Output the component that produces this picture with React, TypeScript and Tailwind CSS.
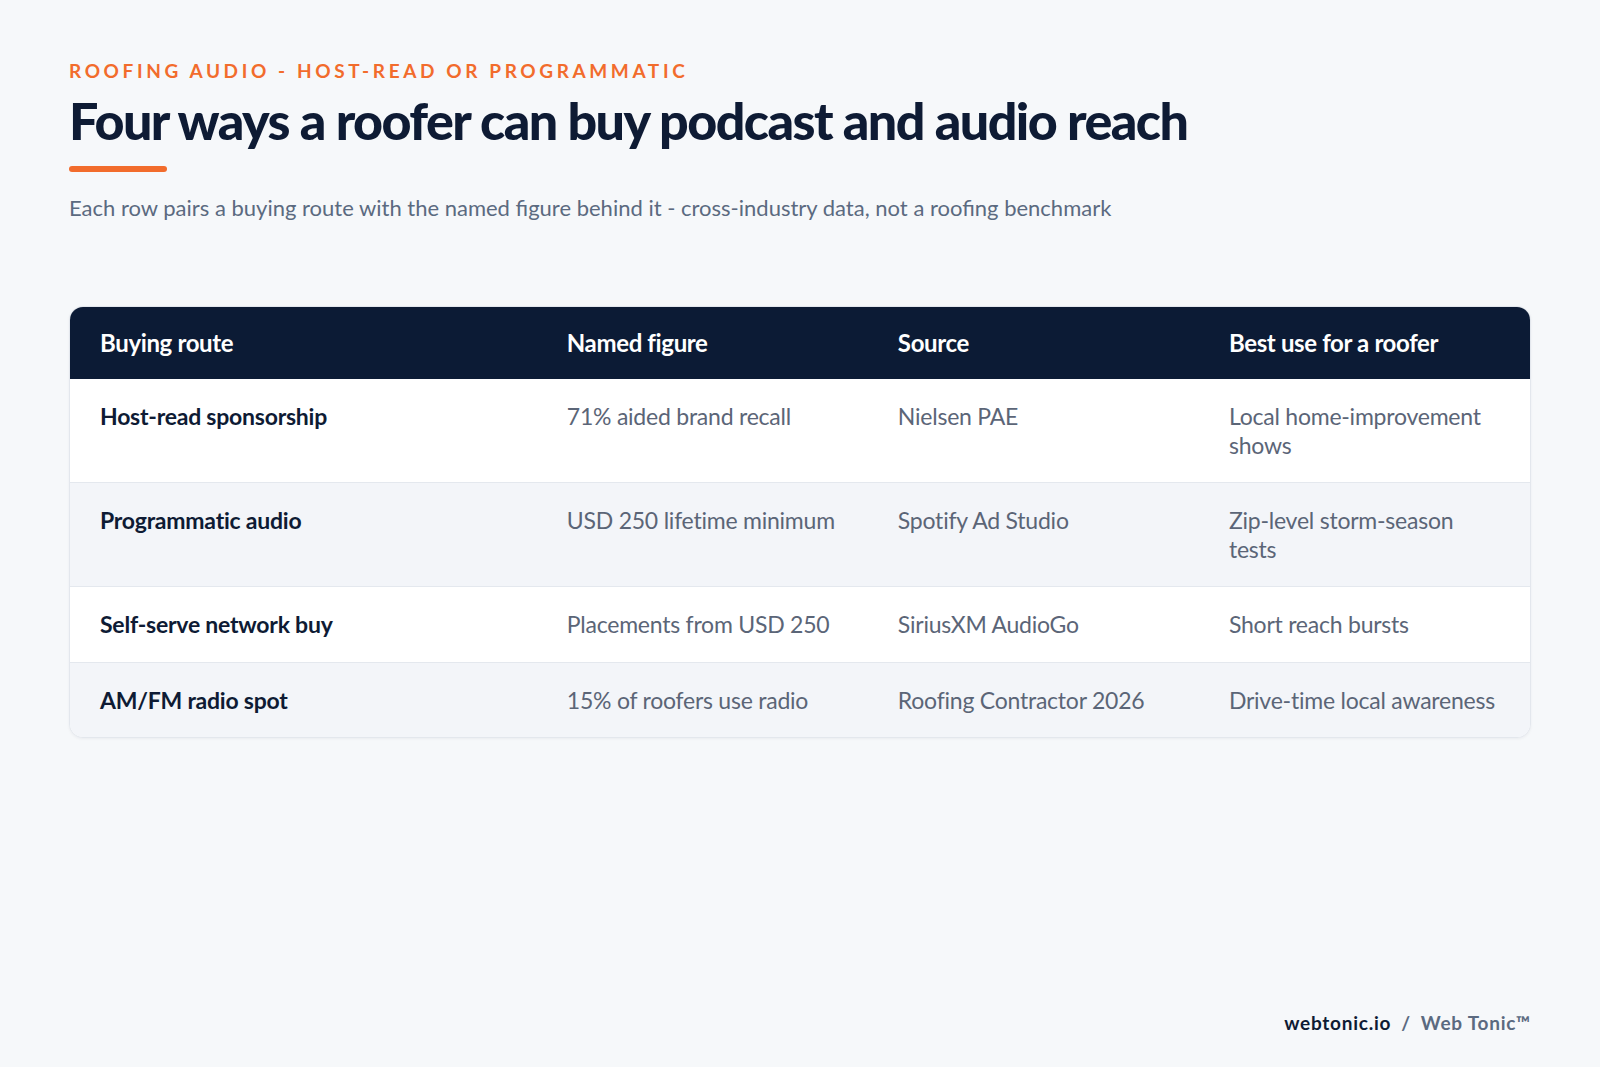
const rows = [
  {
    route: "Host-read sponsorship",
    figure: "71% aided brand recall",
    source: "Nielsen PAE",
    use: "Local home-improvement shows",
  },
  {
    route: "Programmatic audio",
    figure: "USD 250 lifetime minimum",
    source: "Spotify Ad Studio",
    use: "Zip-level storm-season tests",
  },
  {
    route: "Self-serve network buy",
    figure: "Placements from USD 250",
    source: "SiriusXM AudioGo",
    use: "Short reach bursts",
  },
  {
    route: "AM/FM radio spot",
    figure: "15% of roofers use radio",
    source: "Roofing Contractor 2026",
    use: "Drive-time local awareness",
  },
];

const columns = ["Buying route", "Named figure", "Source", "Best use for a roofer"];

export default function App() {
  return (
    <div
      className="flex flex-col w-full min-h-[1067px] bg-[#f6f8fa] px-[69px] pt-[58px] pb-[30px]"
      style={{ fontFamily: "Lato, 'Noto Sans', sans-serif" }}>
      <div className="text-[19px] font-bold uppercase tracking-[0.19em] leading-[26px] text-[#f26c2c]">
        Roofing audio - host-read or programmatic
      </div>

      <h1 className="mt-[6px] text-[52px] font-black leading-[60px] tracking-[-0.03em] text-[#0e1b34]">
        Four ways a roofer can buy podcast and audio reach
      </h1>

      <div className="mt-[16px] h-[6px] w-[98px] rounded-full bg-[#f26c2c]" />

      <p className="mt-[21px] text-[22px] leading-[30px] text-[#5b6a80]">
        Each row pairs a buying route with the named figure behind it - cross-industry data, not a roofing benchmark
      </p>

      <div className="mt-[83px] overflow-hidden rounded-[14px] border border-[#e3e7ed] bg-white shadow-[0_1px_3px_rgba(15,27,52,0.05)]">
        <div className="grid grid-cols-[1.41fr_1fr_1fr_1fr] bg-[#0c1b35] h-[72px] items-center">
          {columns.map((column) => (
            <div key={column} className="pl-[30px] pr-[28px] text-[24px] font-bold text-white tracking-[-0.015em]">
              {column}
            </div>
          ))}
        </div>

        {rows.map((row, i) => (
          <div
            key={row.route}
            className={`grid grid-cols-[1.41fr_1fr_1fr_1fr] text-[23px] leading-[28.5px] tracking-[-0.01em] ${i % 2 === 1 ? "bg-[#f3f5f9]" : "bg-white"} ${i > 0 ? "border-t border-[#e4e8ee]" : ""}`}>
            <div className="pl-[30px] pr-[28px] py-[23px] font-bold text-[#0e1b34]">{row.route}</div>
            <div className="pl-[30px] pr-[28px] py-[23px] text-[#5b6577]">{row.figure}</div>
            <div className="pl-[30px] pr-[28px] py-[23px] text-[#5b6577]">{row.source}</div>
            <div className="pl-[30px] pr-[28px] py-[23px] text-[#5b6577]">{row.use}</div>
          </div>
        ))}
      </div>

      <div className="mt-auto flex justify-end items-center gap-[10px] text-[19px] font-bold tracking-[0.04em]">
        <span className="text-[#0e1b34]">webtonic.io</span>
        <span className="text-[#5b6a80]">/</span>
        <span className="text-[#5b6a80]">Web Tonic™</span>
      </div>
    </div>
  );
}
